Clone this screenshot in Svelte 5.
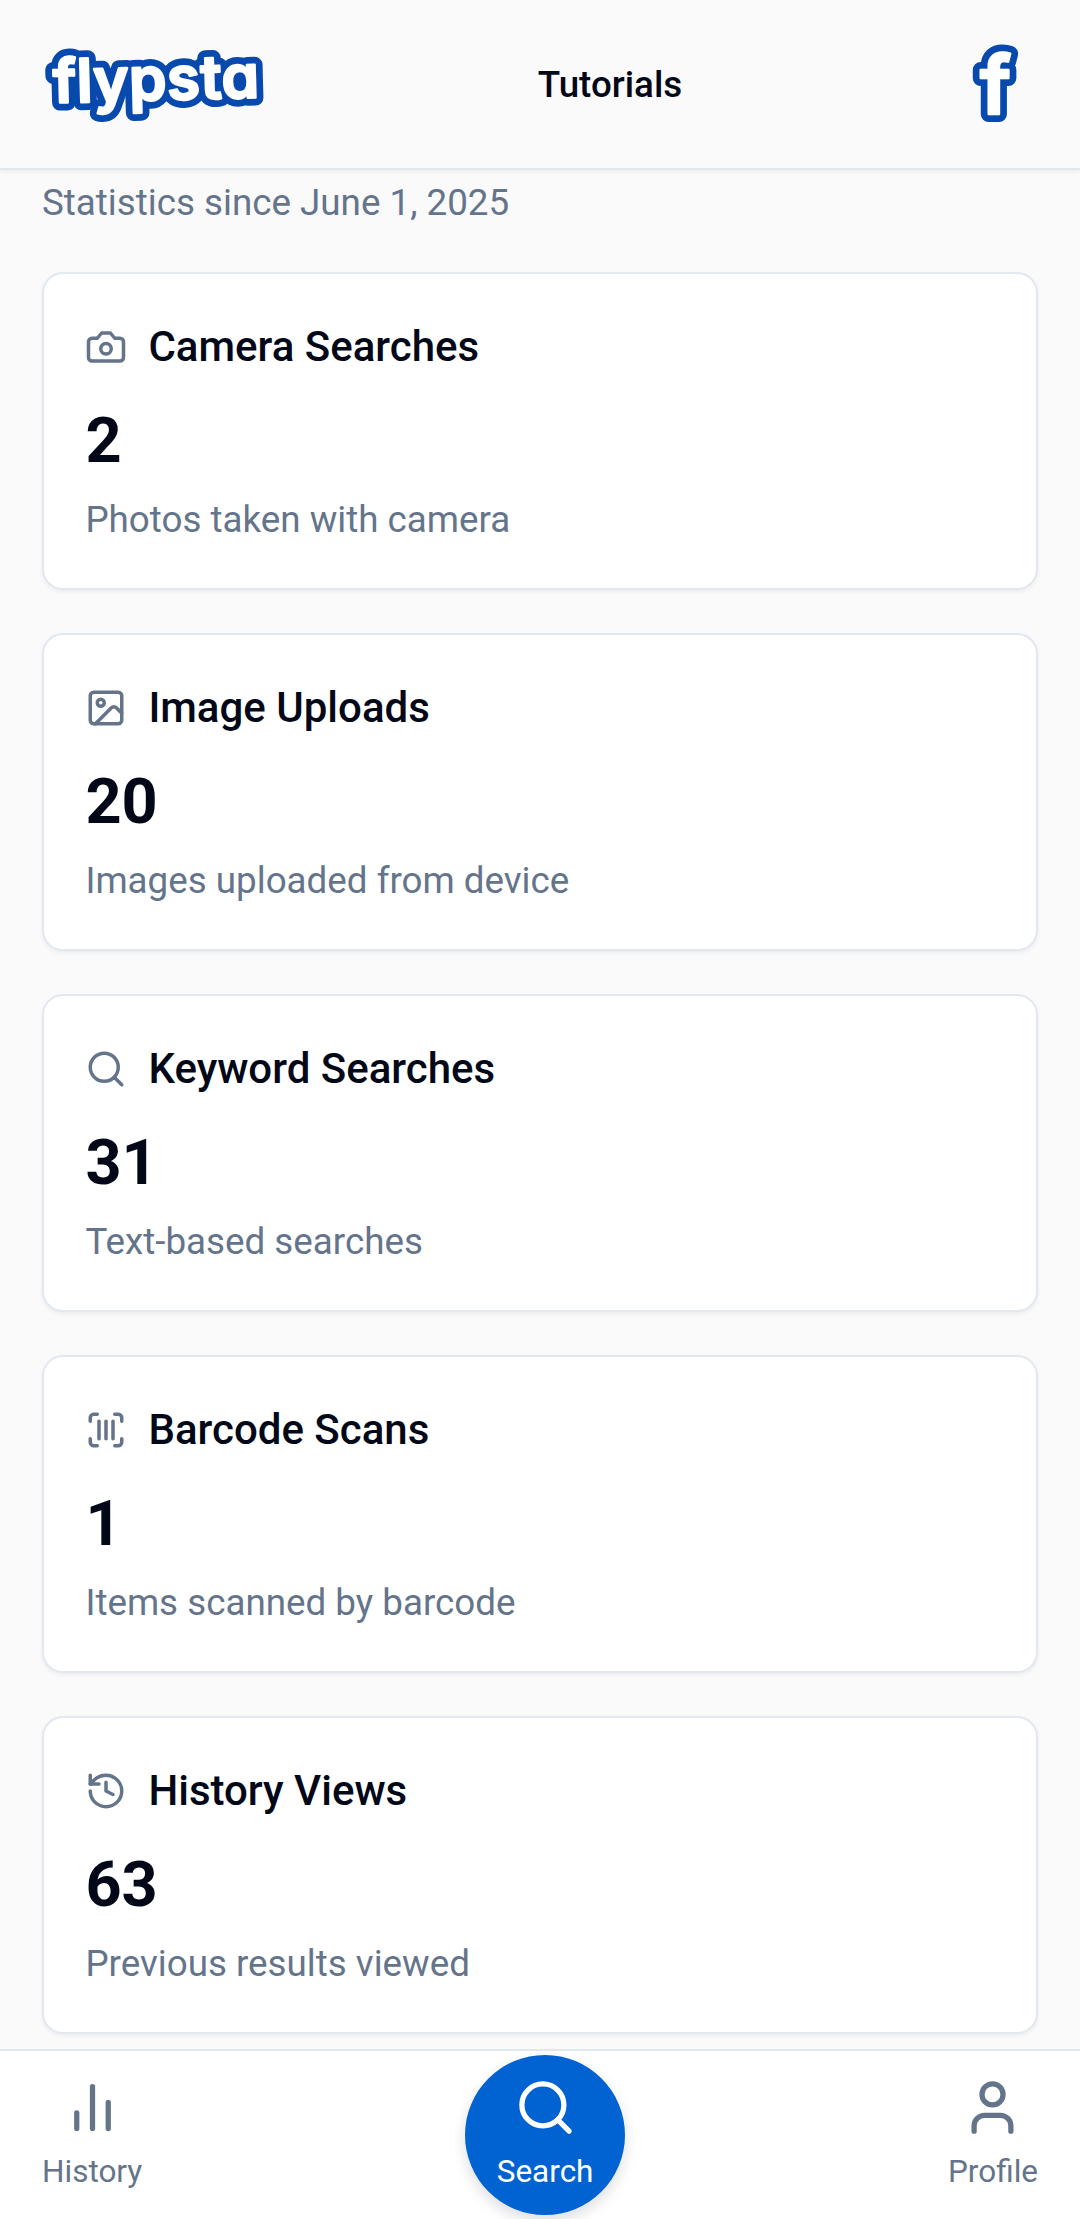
<script>
  const stats = [
    { icon: 'camera', title: 'Camera Searches', value: 2, desc: 'Photos taken with camera' },
    { icon: 'image', title: 'Image Uploads', value: 20, desc: 'Images uploaded from device' },
    { icon: 'search', title: 'Keyword Searches', value: 31, desc: 'Text-based searches' },
    { icon: 'barcode', title: 'Barcode Scans', value: 1, desc: 'Items scanned by barcode' },
    { icon: 'history', title: 'History Views', value: 63, desc: 'Previous results viewed' }
  ];
</script>

<div class="page">
  <header class="top">
    <svg class="logo" viewBox="0 0 240 100" aria-label="flypsta">
      <g transform="rotate(-1.5 120 50)">
        <text class="edge" x="12" y="66" textLength="206" lengthAdjust="spacing">flypsta</text>
        <text class="fill" x="12" y="66" textLength="206" lengthAdjust="spacing">flypsta</text>
      </g>
    </svg>
    <span class="tutorials">Tutorials</span>
    <svg class="flogo" viewBox="0 0 80 100" aria-label="f">
      <text class="edge" x="21" y="80">f</text>
      <text class="fill" x="21" y="80">f</text>
    </svg>
  </header>

  <main class="content">
    <p class="since">Statistics since June 1, 2025</p>
    <div class="cards">
      {#each stats as s}
        <section class="card">
          <div class="card-head">
            <svg class="icon" viewBox="0 0 24 24">
              {#if s.icon === 'camera'}
                <path d="M14.5 4h-5L7 7H4a2 2 0 0 0-2 2v9a2 2 0 0 0 2 2h16a2 2 0 0 0 2-2V9a2 2 0 0 0-2-2h-3l-2.5-3z" />
                <circle cx="12" cy="13" r="3" />
              {:else if s.icon === 'image'}
                <rect x="3" y="3" width="18" height="18" rx="2" ry="2" />
                <circle cx="9" cy="9" r="2" />
                <path d="m21 15-3.086-3.086a2 2 0 0 0-2.828 0L6 21" />
              {:else if s.icon === 'search'}
                <circle cx="11" cy="11" r="8" />
                <path d="m21 21-4.3-4.3" />
              {:else if s.icon === 'barcode'}
                <path d="M3 7V5a2 2 0 0 1 2-2h2" />
                <path d="M17 3h2a2 2 0 0 1 2 2v2" />
                <path d="M21 17v2a2 2 0 0 1-2 2h-2" />
                <path d="M7 21H5a2 2 0 0 1-2-2v-2" />
                <path d="M8 7v10" />
                <path d="M12 7v10" />
                <path d="M16 7v10" />
              {:else}
                <path d="M3 12a9 9 0 1 0 9-9 9.75 9.75 0 0 0-6.74 2.74L3 8" />
                <path d="M3 3v5h5" />
                <path d="M12 7v5l4 2" />
              {/if}
            </svg>
            <h2>{s.title}</h2>
          </div>
          <div class="value">{s.value}</div>
          <p class="desc">{s.desc}</p>
        </section>
      {/each}
    </div>
  </main>

  <nav class="bottom">
    <div class="tab">
      <svg class="nav-icon" viewBox="0 0 24 24">
        <line x1="18" x2="18" y1="20" y2="10" />
        <line x1="12" x2="12" y1="20" y2="4" />
        <line x1="6" x2="6" y1="20" y2="14" />
      </svg>
      <span>History</span>
    </div>
    <div class="tab primary">
      <svg class="nav-icon" viewBox="0 0 24 24">
        <circle cx="11" cy="11" r="8" />
        <path d="m21 21-4.3-4.3" />
      </svg>
      <span>Search</span>
    </div>
    <div class="tab">
      <svg class="nav-icon" viewBox="0 0 24 24">
        <path d="M19 21v-2a4 4 0 0 0-4-4H9a4 4 0 0 0-4 4v2" />
        <circle cx="12" cy="7" r="4" />
      </svg>
      <span>Profile</span>
    </div>
  </nav>
</div>

<style>
  :global(body) {
    margin: 0;
    background: #fafafa;
  }
  .page {
    height: 2219px;
    display: flex;
    flex-direction: column;
    overflow: hidden;
    background: #fafafa;
    font-family: Roboto, "Liberation Sans", sans-serif;
    color: #020817;
  }
  .top {
    flex: none;
    position: relative;
    z-index: 1;
    height: 168px;
    display: flex;
    align-items: center;
    justify-content: space-between;
    padding: 0 41px;
    border-bottom: 2px solid #e2e8f0;
    box-shadow: 0 2px 4px rgba(15, 23, 42, 0.05);
    background: #fafafa;
  }
  .logo {
    width: 240px;
    height: 100px;
  }
  .logo text,
  .flogo text {
    font-family: Inter, Lato, sans-serif;
    font-weight: 600;
    font-feature-settings: "cv11" 1;
    stroke-linejoin: round;
    stroke-linecap: round;
  }
  .logo text {
    font-size: 60px;
  }
  .flogo text {
    font-size: 80px;
  }
  .edge {
    fill: #0849ad;
    stroke: #0849ad;
    stroke-width: 16px;
  }
  .fill {
    fill: #fff;
    stroke: #fff;
    stroke-width: 2.5px;
  }
  .tutorials {
    font-size: 36.75px;
    font-weight: 470;
    line-height: 52px;
    position: relative;
    top: 1px;
    left: -10px;
  }
  .flogo {
    width: 80px;
    height: 100px;
  }
  .content {
    flex: 1;
    min-height: 0;
    overflow: hidden;
    padding: 0 42px;
  }
  .since {
    margin: 7px 0 42px;
    font-size: 36.75px;
    line-height: 52.5px;
    color: #64748b;
  }
  .cards {
    display: flex;
    flex-direction: column;
    gap: 43px;
  }
  .card {
    box-sizing: border-box;
    height: 318px;
    padding: 42px 39.4px 0 41.4px;
    background: #fff;
    border: 2.625px solid #e2e8f0;
    border-radius: 21px;
    box-shadow: 0 2px 4px rgba(15, 23, 42, 0.06);
  }
  .card-head {
    display: flex;
    align-items: center;
    gap: 21px;
    height: 63px;
  }
  .icon {
    flex: none;
    width: 42px;
    height: 42px;
    color: #64748b;
  }
  .icon *,
  .nav-icon * {
    fill: none;
    stroke: currentColor;
    stroke-width: 2;
    stroke-linecap: round;
    stroke-linejoin: round;
  }
  h2 {
    margin: 0;
    font-size: 42px;
    font-weight: 470;
    line-height: 52.5px;
  }
  .value {
    margin-top: 25.4px;
    font-size: 63px;
    font-weight: 700;
    line-height: 73.5px;
  }
  .desc {
    margin: 16.6px 0 0;
    font-size: 36.75px;
    line-height: 52.5px;
    color: #64748b;
  }
  .bottom {
    flex: none;
    position: relative;
    z-index: 1;
    height: 170px;
    box-sizing: border-box;
    display: flex;
    justify-content: space-between;
    align-items: flex-start;
    padding: 0 42px;
    border-top: 2.625px solid #e2e8f0;
    background: #fff;
  }
  .tab {
    display: flex;
    flex-direction: column;
    align-items: center;
    margin-top: 25.4px;
    color: #64748b;
    font-size: 31.5px;
    line-height: 42px;
  }
  .nav-icon {
    width: 63px;
    height: 63px;
    margin-bottom: 12px;
  }
  .tab.primary {
    box-sizing: border-box;
    width: 160px;
    height: 160px;
    margin-top: 4.4px;
    padding-top: 21px;
    border-radius: 50%;
    background: #0063d1;
    color: #fff;
    box-shadow: 0 6px 14px rgba(15, 23, 42, 0.14);
  }
</style>
